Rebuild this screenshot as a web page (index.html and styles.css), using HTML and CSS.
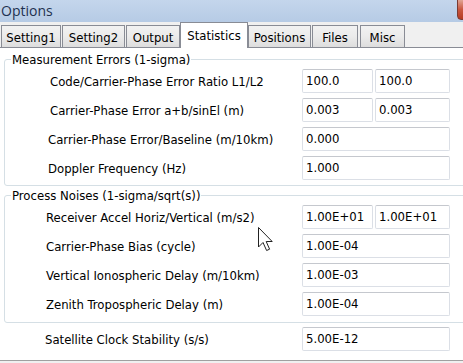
FILE: index.html
```html
<!DOCTYPE html>
<html>
<head>
<meta charset="utf-8">
<link rel="stylesheet" href="styles.css">
</head>
<body>
<div class="window">
  <div class="titlebar">
    <span class="title">Options</span>
    <span class="close"></span>
  </div>
  <div class="tabs">
    <div class="tab t1">Setting1</div>
    <div class="tab t2">Setting2</div>
    <div class="tab t3">Output</div>
    <div class="tab active t4">Statistics</div>
    <div class="tab t5">Positions</div>
    <div class="tab t6">Files</div>
    <div class="tab t7">Misc</div>
  </div>
  <div class="panel">
    <fieldset class="group g1">
      <legend>Measurement Errors (1-sigma)</legend>
      <div class="row">
        <span class="label">Code/Carrier-Phase Error Ratio L1/L2</span>
        <span class="field">100.0</span>
        <span class="field second">100.0</span>
      </div>
      <div class="row">
        <span class="label">Carrier-Phase Error a+b/sinEl (m)</span>
        <span class="field">0.003</span>
        <span class="field second">0.003</span>
      </div>
      <div class="row">
        <span class="label shift">Carrier-Phase Error/Baseline (m/10km)</span>
        <span class="field wide">0.000</span>
      </div>
      <div class="row">
        <span class="label shift">Doppler Frequency (Hz)</span>
        <span class="field wide">1.000</span>
      </div>
    </fieldset>
    <fieldset class="group g2">
      <legend>Process Noises (1-sigma/sqrt(s))</legend>
      <div class="row">
        <span class="label">Receiver Accel Horiz/Vertical (m/s2)</span>
        <span class="field">1.00E+01</span>
        <span class="field second">1.00E+01</span>
      </div>
      <div class="row">
        <span class="label">Carrier-Phase Bias (cycle)</span>
        <span class="field wide">1.00E-04</span>
      </div>
      <div class="row">
        <span class="label">Vertical Ionospheric Delay (m/10km)</span>
        <span class="field wide">1.00E-03</span>
      </div>
      <div class="row">
        <span class="label">Zenith Tropospheric Delay (m)</span>
        <span class="field wide">1.00E-04</span>
      </div>
    </fieldset>
    <div class="row solo">
      <span class="label">Satellite Clock Stability (s/s)</span>
      <span class="field wide">5.00E-12</span>
    </div>
  </div>
  <svg class="cursor" width="16" height="25" viewBox="0 0 16 25">
    <path d="M0.5 0.5 L0.5 20 L5 15.5 L8.6 23.5 L11.6 22.2 L8.2 14.5 L14.2 14.5 Z" fill="#ffffff" stroke="#222" stroke-width="1" stroke-linejoin="miter"/>
  </svg>
</div>
</body>
</html>
```
FILE: styles.css
```css
html, body {
  margin: 0;
  padding: 0;
}
body {
  width: 463px;
  height: 363px;
  overflow: hidden;
  background: #f0f0f0;
  font-family: "DejaVu Sans Condensed", "DejaVu Sans", sans-serif;
  font-size: 13px;
  color: #000;
}
.window {
  position: relative;
  width: 463px;
  height: 363px;
  overflow: hidden;
}
.titlebar {
  position: relative;
  height: 22px;
  background: linear-gradient(#c4d6ec, #b6cbe5);
  display: flex;
  align-items: center;
  padding-left: 1px;
}
.title {
  font-family: "Open Sans", sans-serif;
  font-size: 14px;
  color: #1e3150;
  line-height: 20px;
}
.close {
  position: absolute;
  left: 457px;
  top: -1px;
  width: 20px;
  height: 19px;
  border: 1px solid #7a3b33;
  border-radius: 0 0 0 4px;
  background: linear-gradient(#e0a493, #c9573f 50%, #b53a22);
}
.tabs {
  display: flex;
  align-items: flex-end;
  height: 25px;
  padding-left: 1px;
  border-bottom: 1px solid #898c95;
  background: #f0f0f0;
}
.tab {
  box-sizing: border-box;
  height: 22px;
  border: 1px solid #898c95;
  border-bottom: none;
  background: linear-gradient(#f2f2f2, #ebebeb 50%, #dddddd);
  display: flex;
  align-items: center;
  justify-content: center;
  padding-top: 1px;
  white-space: nowrap;
  margin-right: 1px;
}
.tab.active {
  height: 26px;
  margin-bottom: -1px;
  background: #fff;
  padding-bottom: 2px;
}
.t1 { width: 60px; }
.t2 { width: 63px; }
.t3 { width: 54px; margin-right: 0; }
.t4 { width: 68px; margin-right: 0; }
.t5 { width: 63px; }
.t6 { width: 46px; margin-right: 2px; }
.t7 { width: 45px; }
.panel {
  height: 313px;
  background: #fff;
  border-bottom: 1px solid #a0a0a0;
  padding-top: 4px;
  box-sizing: border-box;
}
.group {
  margin: 0 -30px 0 4px;
  padding: 2px 0 5px 0;
  border: 1px solid #d5dfe5;
  border-radius: 3px;
}
.group legend {
  margin-left: 6px;
  padding: 0 1px;
  line-height: 15px;
}
.g2 {
  margin-top: 2px;
  padding-bottom: 6px;
}
.row {
  display: grid;
  grid-template-columns: 297px 71px 77px;
  height: 24px;
  align-items: center;
  margin-bottom: 5px;
}
.row:last-child {
  margin-bottom: 0;
}
.g1 .label { padding-left: 45px; }
.g1 .label.shift { padding-left: 43px; }
.g2 .label { padding-left: 41px; }
.row.solo {
  margin-top: 4px;
  grid-template-columns: 302px 71px 77px;
}
.solo .label { padding-left: 45px; }
.label {
  white-space: nowrap;
}
.field {
  box-sizing: border-box;
  height: 24px;
  border: 1px solid #dbdfe6;
  border-top-color: #c5c8ce;
  border-radius: 2px;
  padding-left: 3px;
  line-height: 22px;
  background: #fff;
  white-space: nowrap;
}
.field.second {
  justify-self: end;
  width: 75px;
}
.field.wide {
  grid-column: 2 / 4;
}
.cursor {
  position: absolute;
  left: 258px;
  top: 227px;
}
```
